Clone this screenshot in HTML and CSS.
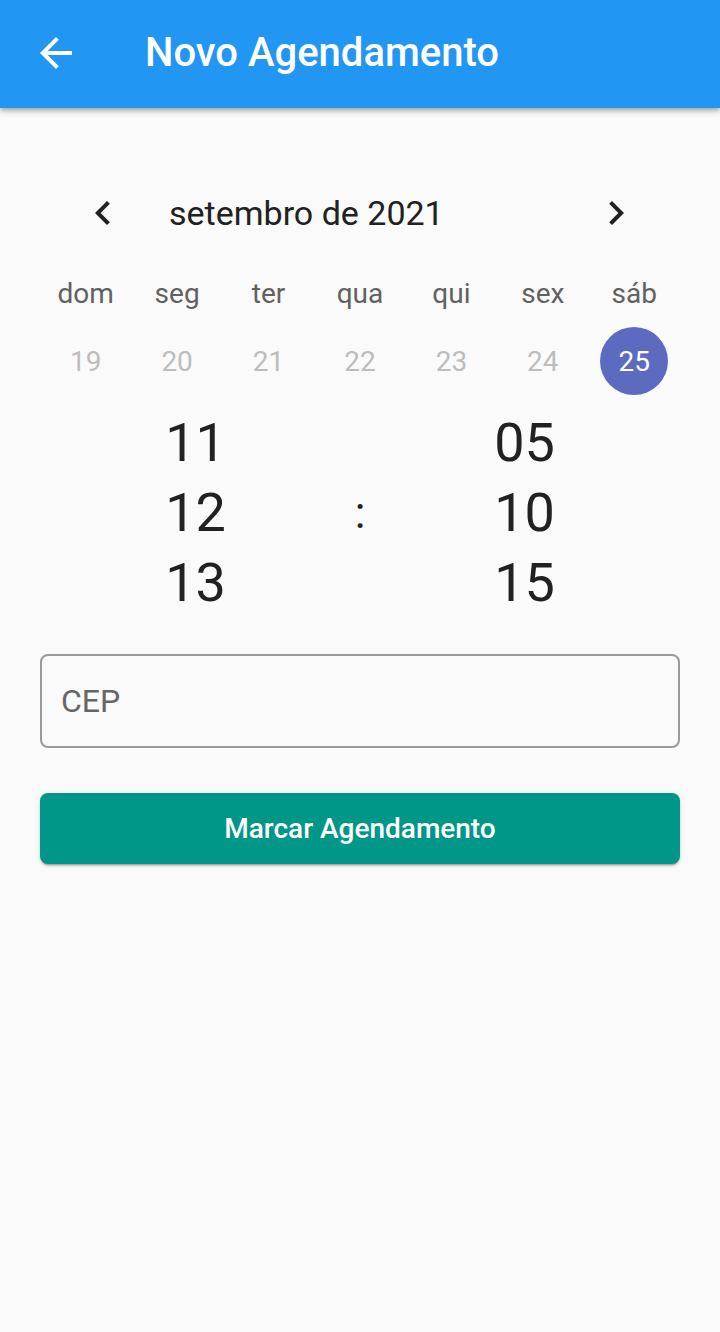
FILE: index.html
```html
<!DOCTYPE html>
<html lang="pt-BR">
<head>
<meta charset="utf-8">
<title>Novo Agendamento</title>
<link rel="stylesheet" href="styles.css">
</head>
<body>
<header class="appbar">
  <span class="icon-btn back">
    <svg viewBox="0 0 24 24" width="48" height="48"><path fill="#fff" d="M20 11H7.83l5.59-5.59L12 4l-8 8 8 8 1.41-1.41L7.83 13H20v-2z"/></svg>
  </span>
  <h1 class="title">Novo Agendamento</h1>
</header>
<main class="content">
  <div class="cal-header">
    <span class="icon-btn">
      <svg viewBox="0 0 24 24" width="48" height="48"><path fill="#212121" d="M15.41 7.41L14 6l-6 6 6 6 1.41-1.41L10.83 12z"/></svg>
    </span>
    <span class="month">setembro de 2021</span>
    <span class="icon-btn next">
      <svg viewBox="0 0 24 24" width="48" height="48"><path fill="#212121" d="M10 6L8.59 7.41 13.17 12l-4.58 4.59L10 18l6-6z"/></svg>
    </span>
  </div>
  <div class="week weekdays">
    <span>dom</span><span>seg</span><span>ter</span><span>qua</span><span>qui</span><span>sex</span><span>sáb</span>
  </div>
  <div class="week days">
    <span>19</span><span>20</span><span>21</span><span>22</span><span>23</span><span>24</span><span class="selected">25</span>
  </div>
  <div class="time">
    <div class="col"><span>11</span><span>12</span><span>13</span></div>
    <div class="col colon"><span></span><span>:</span><span></span></div>
    <div class="col"><span>05</span><span>10</span><span>15</span></div>
  </div>
  <div class="field"><span class="label">CEP</span></div>
  <button class="btn">Marcar Agendamento</button>
</main>
</body>
</html>
```

FILE: styles.css
```css
* { box-sizing: border-box; }
html, body { margin: 0; padding: 0; }
body {
  background: #fafafa;
  font-family: Roboto, "Noto Sans", sans-serif;
  width: 720px;
  min-height: 1332px;
}
.appbar {
  height: 108px;
  background: #2196f3;
  display: flex;
  align-items: center;
  padding-left: 32px;
  box-shadow: 0 2px 4px -1px rgba(0,0,0,.2), 0 4px 5px 0 rgba(0,0,0,.14), 0 1px 10px 0 rgba(0,0,0,.12);
  position: relative;
  z-index: 1;
}
.icon-btn { width: 48px; height: 48px; display: flex; flex: none; }
.back { margin-top: -2px; }
.title {
  margin: 0 0 0 65px;
  color: #fff;
  font-size: 40px;
  font-weight: 500;
  letter-spacing: 0;
  line-height: 1;
  margin-top: -2px;
}
.content { padding: 81px 40px 0; }
.cal-header {
  height: 48px;
  display: flex;
  align-items: center;
  padding-left: 39px;
  padding-right: 40px;
}
.month {
  margin-left: 42px;
  font-size: 34px;
  color: #212121;
}
.next { margin-left: auto; }
.week {
  display: grid;
  grid-template-columns: repeat(7, 1fr);
  height: 68px;
  align-items: center;
  justify-items: center;
  font-size: 28px;
}
.weekdays { margin-top: 22px; color: #616161; }
.days { color: #bdbdbd; }
.days span {
  width: 68px; height: 68px;
  display: flex; align-items: center; justify-content: center;
  border-radius: 50%;
}
.days .selected { background: #5c6bc0; color: #fff; }
.time {
  margin-top: 13px;
  display: grid;
  grid-template-columns: 1fr 18px 1fr;
  color: #212121;
  font-size: 54px;
}
.col { display: flex; flex-direction: column; align-items: center; }
.col span { height: 70px; line-height: 70px; }
.colon { font-size: 44px; }
.field {
  margin-top: 36px;
  height: 94px;
  border: 2px solid #9a9a9a;
  border-radius: 8px;
  display: flex;
  align-items: center;
  padding-left: 19px;
}
.label { font-size: 32px; color: #666; }
.btn {
  display: block;
  width: 100%;
  margin-top: 45px;
  height: 71px;
  border: none;
  border-radius: 8px;
  background: #009688;
  color: #fff;
  font-family: Roboto, "Noto Sans", sans-serif;
  font-size: 28px;
  font-weight: 500;
  box-shadow: 0 3px 1px -2px rgba(0,0,0,.2), 0 2px 2px 0 rgba(0,0,0,.14), 0 1px 5px 0 rgba(0,0,0,.12);
}
```
